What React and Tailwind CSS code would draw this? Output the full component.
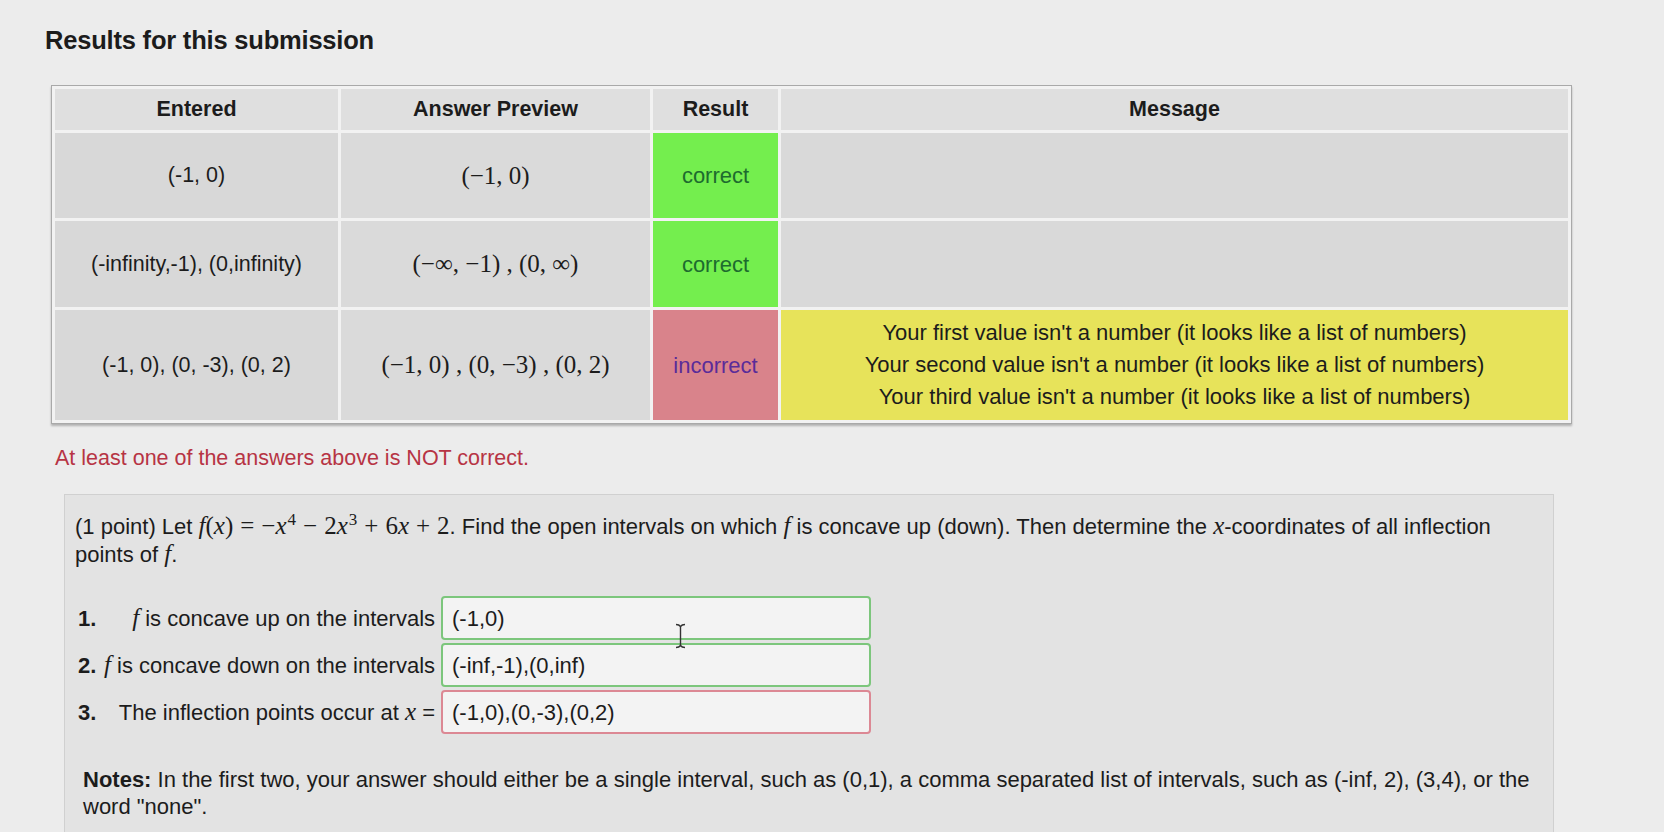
import React from "react";

const sans = { fontFamily: '"Liberation Sans", Arial, sans-serif' };

const rows = [
  { entered: "(-1, 0)", preview: "(−1, 0)", ok: true, h: "h-[88px]", msg: [] },
  {
    entered: "(-infinity,-1), (0,infinity)",
    preview: "(−∞, −1) , (0, ∞)",
    ok: true,
    h: "h-[89px]",
    msg: [],
  },
  {
    entered: "(-1, 0), (0, -3), (0, 2)",
    preview: "(−1, 0) , (0, −3) , (0, 2)",
    ok: false,
    h: "h-[113px]",
    msg: [
      "Your first value isn't a number (it looks like a list of numbers)",
      "Your second value isn't a number (it looks like a list of numbers)",
      "Your third value isn't a number (it looks like a list of numbers)",
    ],
  },
];

// math-ish inline pieces, roughly like MathJax output
const I = ({ children }) => (
  <span className="font-['Liberation_Serif',serif] italic text-[25px]">{children}</span>
);
const M = ({ children }) => <span className="font-['Liberation_Serif',serif] text-[25px]">{children}</span>;
const Op = ({ children }) => (
  <span className="font-['Liberation_Serif',serif] text-[25px] mx-[7px]">{children}</span>
);
const Sup = ({ children }) => (
  <sup className="font-['Liberation_Serif',serif] text-[17px] relative -top-[9px] ml-[1px]">{children}</sup>
);

const Answer = ({ n, label, value, ok }) => (
  <>
    <div className="font-bold">{n}.</div>
    <div className="text-right pr-[6px] whitespace-nowrap">{label}</div>
    <div
      className={
        "h-[44px] w-[430px] rounded-[4px] border-2 bg-[#f3f3f3] flex items-center px-[9px] " +
        (ok ? "border-[#7cc67c]" : "border-[#dc8894]")
      }
    >
      {value}
    </div>
  </>
);

const cell = "border-[3px] border-[#f2f2f2]";

export default function App() {
  return (
    <div className="min-h-[832px] bg-[#ececec] text-[#1c1c1c] overflow-hidden" style={sans}>
      <div className="pl-[45px] pt-[24px]">
        <h2 className="text-[25.5px] font-bold leading-[32px] tracking-[-0.2px]">Results for this submission</h2>
      </div>

      <div className="ml-[51px] mt-[29px] w-[1521px] border border-[#a9a9a9] shadow-[0_2px_2px_rgba(0,0,0,0.25)]">
        <table className="w-full border-collapse table-fixed text-[21.5px]">
          <colgroup>
            <col className="w-[286px]" />
            <col className="w-[312px]" />
            <col className="w-[128px]" />
            <col />
          </colgroup>
          <thead>
            <tr className="h-[44px] bg-[#dfdfdf] text-[21.5px]">
              <th className={cell + " font-bold"}>Entered</th>
              <th className={cell + " font-bold"}>Answer Preview</th>
              <th className={cell + " font-bold"}>Result</th>
              <th className={cell + " font-bold"}>Message</th>
            </tr>
          </thead>
          <tbody>
            {rows.map((r, i) => (
              <tr key={i} className={r.h + " text-center"}>
                <td className={cell + " bg-[#d8d8d8]"}>{r.entered}</td>
                <td className={cell + " bg-[#dadada] font-['Liberation_Serif',serif] text-[25px]"}>{r.preview}</td>
                <td
                  className={
                    cell +
                    " text-[22px] " +
                    (r.ok ? "bg-[#74ee4e] text-[#1d6b2e]" : "bg-[#d9838b] text-[#5a2c99]")
                  }
                >
                  {r.ok ? "correct" : "incorrect"}
                </td>
                <td
                  className={
                    cell + " text-[22px] leading-[32px] " + (r.msg.length ? "bg-[#e7e35a]" : "bg-[#d9d9d9]")
                  }
                >
                  {r.msg.map((m) => (
                    <div key={m}>{m}</div>
                  ))}
                </td>
              </tr>
            ))}
          </tbody>
        </table>
      </div>

      <p className="ml-[55px] mt-[21px] text-[21.5px] leading-[26px] text-[#b73444]">
        At least one of the answers above is NOT correct.
      </p>

      <div className="relative ml-[64px] mt-[23px] w-[1490px] h-[420px] bg-[#e3e3e3] border border-[#d0d0d0] pl-[10px] pr-[20px] pt-[17px] text-[22px] leading-[27px]">
        <p>
          (1 point) Let <I>f</I>
          <M>(</M>
          <I>x</I>
          <M>)</M>
          <Op>=</Op>
          <M>−</M>
          <I>x</I>
          <Sup>4</Sup>
          <Op>−</Op>
          <M>2</M>
          <I>x</I>
          <Sup>3</Sup>
          <Op>+</Op>
          <M>6</M>
          <I>x</I>
          <Op>+</Op>
          <M>2</M>. Find the open intervals on which <I>f</I> is concave up (down). Then determine the{" "}
          <I>x</I>-coordinates of all inflection points of <I>f</I>.
        </p>

        <div className="mt-[28px] pl-[3px] grid grid-cols-[26px_auto_auto] items-center gap-y-[3px] justify-start">
          <Answer
            n="1"
            ok
            label={
              <>
                <I>f</I> is concave up on the intervals
              </>
            }
            value="(-1,0)"
          />
          <Answer
            n="2"
            ok
            label={
              <>
                <I>f</I> is concave down on the intervals
              </>
            }
            value="(-inf,-1),(0,inf)"
          />
          <Answer
            n="3"
            ok={false}
            label={
              <>
                The inflection points occur at <I>x</I> =
              </>
            }
            value="(-1,0),(0,-3),(0,2)"
          />
        </div>

        {/* text cursor */}
        <svg className="absolute left-[609px] top-[128px]" width="13" height="26" viewBox="0 0 13 26">
          <path d="M2 1.5c2 0 3.5 0.5 4.5 2c1-1.5 2.5-2 4.5-2M6.5 3.5v19M2 24.5c2 0 3.5-0.5 4.5-2c1 1.5 2.5 2 4.5 2" stroke="#333" strokeWidth="1.4" fill="none" />
        </svg>

        <p className="mt-[32px] pl-[8px]">
          <span className="font-bold">Notes:</span> In the first two, your answer should either be a single
          interval, such as (0,1), a comma separated list of intervals, such as (-inf, 2), (3,4), or the word
          "none".
        </p>
      </div>
    </div>
  );
}
